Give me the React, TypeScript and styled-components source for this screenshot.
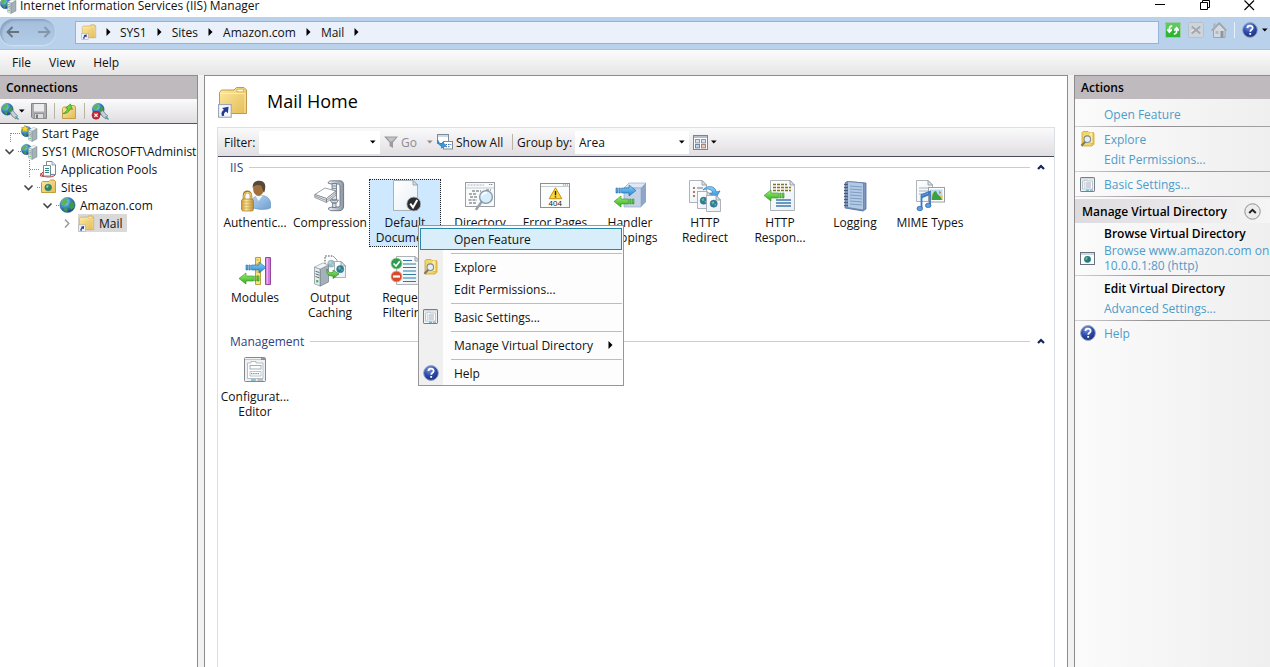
import React from "react";
import styled, { createGlobalStyle } from "styled-components";

const GlobalStyle = createGlobalStyle`
  * { box-sizing: border-box; }
  html, body, #root { height: 100%; }
  body {
    margin: 0;
    overflow: hidden;
    background: #f0f0f0;
    color: #111;
    font-family: "Open Sans", "Noto Sans", sans-serif;
    font-size: 12px;
    line-height: 15px;
  }
  button, input, select { font: inherit; color: inherit; }
  button { border: 0; padding: 0; background: none; text-align: left; }
  ul { list-style: none; margin: 0; padding: 0; }
  h1, h2, h3 { margin: 0; font-size: inherit; }
  svg { display: block; flex: none; }
`;

/* ---------- window frame ---------- */

const Window = styled.div`
  display: flex;
  flex-direction: column;
  min-height: 100%;
`;

const TitleBar = styled.header`
  display: flex;
  align-items: center;
  height: 17px;
  padding-bottom: 6px;
  background: #fff;
`;

const WindowTitle = styled.h1`
  flex: 1;
  padding-left: 3px;
  font-weight: 400;
`;

const WindowButton = styled.button`
  display: flex;
  justify-content: center;
  width: 45px;
  &:last-child { width: 42px; }
`;

const NavBar = styled.nav`
  display: flex;
  align-items: center;
  height: 33px;
  padding-bottom: 2px;
  background: #b9d1ea;
  border-bottom: 1px solid #a9c1de;
`;

const BackForward = styled.div`
  display: flex;
  justify-content: space-between;
  align-items: center;
  width: 55px;
  height: 26px;
  padding: 0 4px 0 6px;
  border-radius: 13px;
  background: linear-gradient(#a3bddb, #b3cce8);
  box-shadow: inset 2px 2px 2px #8ca6c4, 0 1px 2px #d6e4f5;
`;

const Address = styled.ol`
  display: flex;
  align-items: center;
  flex: 1;
  height: 23px;
  margin: 0 0 0 20px;
  padding: 0 0 0 5px;
  list-style: none;
  background: #eaf1fb;
  border: 1px solid #96b3d4;
`;

const Crumb = styled.li`
  display: flex;
  align-items: center;
  & > svg:last-child { margin: 0 10px; }
  &:first-child > svg:last-child { margin: 0 9px; }
`;

const NavTools = styled.div`
  display: flex;
  align-items: center;
  gap: 7px;
  width: 111px;
  padding: 0 0 4px 6px;
`;

const Divider = styled.span<{ $light?: boolean }>`
  width: 1px;
  height: 16px;
  background: ${(p) => (p.$light ? "#e6effa" : "#b9b4a4")};
`;

const MenuBar = styled.div`
  display: flex;
  align-items: center;
  height: 25px;
  gap: 18px;
  padding-left: 12px;
  background: linear-gradient(#fcfcfc, #e6e5e6);
`;

const Body = styled.div`
  display: flex;
  flex: 1;
  gap: 6px;
  background: #f3f2f3;
`;

/* ---------- shared ---------- */

const PanelTitle = styled.h2`
  height: 24px;
  padding: 4px 6px;
  font-weight: 600;
  font-size: 12px;
  line-height: 15px;
  color: #000;
  background: #bebabe;
  border-top: 1px solid #8e8c8e;
`;

const IconButton = styled.button<{ $gap?: number }>`
  display: flex;
  align-items: center;
  gap: ${(p) => p.$gap ?? 0}px;
`;

/* ---------- connections ---------- */

const Connections = styled.aside`
  width: 198px;
  flex: none;
  background: #fff;
  border-right: 1px solid #8c8c8c;
  overflow: hidden;
`;

const TreeToolbar = styled.div`
  display: flex;
  align-items: center;
  height: 25px;
  padding-left: 1px;
  border-bottom: 1px solid #55535a;
  background: linear-gradient(#fbfbfb, #dfdde0);
`;

const ToolGroup = styled.div`
  display: flex;
  align-items: center;
  gap: 6px;
  & + & { margin-left: 7px; }
`;

const TreeRow = styled.li<{ $level: number }>`
  display: flex;
  align-items: center;
  height: 18px;
  padding-left: ${(p) => p.$level * 19}px;
  white-space: nowrap;
`;

const TreeNode = styled.span<{ $selected?: boolean }>`
  display: flex;
  align-items: center;
  gap: 4px;
  height: 18px;
  padding-right: 4px;
  background: ${(p) => (p.$selected ? "#d9d9d9" : "transparent")};
`;

/* ---------- workspace ---------- */

const Workspace = styled.main`
  display: flex;
  flex-direction: column;
  flex: 1;
  min-width: 0;
  padding: 0 12px;
  background: #fff;
  border: 1px solid #8c8c8c;
  border-bottom: 0;
`;

const Heading = styled.div`
  display: flex;
  align-items: center;
  gap: 18px;
  height: 51px;
`;

const PageTitle = styled.h2`
  padding-bottom: 2px;
  font-size: 18px;
  line-height: 24px;
  font-weight: 400;
  color: #000;
`;

const FeatureBox = styled.section`
  flex: 1;
  border: 1px solid #dcdfe3;
  border-bottom: 0;
`;

const FilterBar = styled.div`
  display: flex;
  align-items: center;
  height: 29px;
  padding-left: 2px;
  background: linear-gradient(#fbfafb, #e0dee1);
  border-bottom: 1px solid #4a485c;
`;

const FilterLabel = styled.label<{ $width: number }>`
  width: ${(p) => p.$width}px;
  padding-left: 4px;
  white-space: nowrap;
`;

const Combo = styled.span<{ $width: number }>`
  display: flex;
  align-items: center;
  width: ${(p) => p.$width}px;
  height: 23px;
  padding-right: 4px;
  background: #fff;
  & input, & select {
    flex: 1;
    min-width: 0;
    height: 23px;
    border: 0;
    outline: 0;
    padding: 0 4px;
    background: none;
    appearance: none;
  }
`;

const BarButton = styled.button<{ $muted?: boolean; $width?: number }>`
  display: flex;
  align-items: center;
  gap: 3px;
  width: ${(p) => (p.$width ? p.$width + "px" : "auto")};
  margin-left: 4px;
  white-space: nowrap;
  color: ${(p) => (p.$muted ? "#8d8b8f" : "#111")};
`;

const GroupHeader = styled.div`
  display: flex;
  align-items: center;
  gap: 6px;
  height: 20px;
  padding: 0 8px 0 12px;
  color: #2f4180;
  & h3 { font-weight: 400; }
`;

const Rule = styled.span`
  flex: 1;
  height: 1px;
  background: #c2cfd8;
`;

const TileGrid = styled.ul`
  display: flex;
  flex-wrap: wrap;
  padding: 2px 60px 2px 0;
`;

const Tile = styled.li`
  position: relative;
  width: 75px;
  height: 75px;
`;

const TileButton = styled.button<{ $selected?: boolean }>`
  display: flex;
  flex-direction: column;
  align-items: center;
  gap: 3px;
  width: 72px;
  height: 68px;
  margin: 0 1px;
  text-align: center;
  white-space: pre;
  border: 1px dotted ${(p) => (p.$selected ? "#222" : "transparent")};
  background: ${(p) => (p.$selected ? "#cde8ff" : "transparent")};
`;

/* ---------- context menu ---------- */

const ContextMenu = styled.div`
  position: absolute;
  left: 50px;
  top: 46px;
  z-index: 2;
  width: 206px;
  padding: 2px 1px 1px;
  border: 1px solid #979797;
  background: linear-gradient(to right, #f0f0f0 24px, #fdfdfd 24px);
`;

const MenuItem = styled.button<{ $active?: boolean }>`
  display: flex;
  align-items: center;
  width: 100%;
  height: 22px;
  padding: 0 8px 0 2px;
  border: 1px solid ${(p) => (p.$active ? "#2a85ad" : "transparent")};
  background: ${(p) => (p.$active ? "#d8eefb" : "transparent")};
`;

const MenuIcon = styled.span`
  width: 31px;
  height: 16px;
`;

const MenuText = styled.span`
  flex: 1;
  white-space: nowrap;
`;

const MenuSeparator = styled.div`
  height: 1px;
  margin: 3px 0 2px 31px;
  background: #bdbdbd;
`;

/* ---------- actions ---------- */

const Actions = styled.aside`
  width: 196px;
  flex: none;
  background: linear-gradient(to right, #fbfbfb, #f0eff0);
  border-left: 1px solid #8c8c8c;
`;

const ActionList = styled.div`
  padding-top: 5px;
`;

const ActionRow = styled.div`
  display: flex;
  align-items: center;
  min-height: 20px;
  padding-left: 5px;
`;

const ActionIcon = styled.span`
  width: 24px;
  flex: none;
`;

const ActionLink = styled.a`
  color: #4d9cc9;
  text-decoration: none;
  white-space: pre;
`;

const ActionHeading = styled.h3`
  white-space: nowrap;
  font-weight: 600;
  color: #000;
`;

const ActionRule = styled.div`
  height: 1px;
  margin: 2px 0;
  background: linear-gradient(to right, #d4d2d4, #8f8d8f 40%, #a3a1a3);
`;

const SectionBar = styled.div`
  display: flex;
  align-items: center;
  justify-content: space-between;
  height: 24px;
  padding: 0 9px 0 7px;
  white-space: nowrap;
  background: linear-gradient(to right, #dddbdd, #f6f5f6);
`;

/* ---------- icons ---------- */

const HiddenSvg = styled.svg`
  position: absolute;
`;

const Defs = () => (
  <HiddenSvg width="0" height="0" aria-hidden>
    <defs>
      <radialGradient id="sea" cx="35%" cy="30%" r="75%">
        <stop offset="0" stopColor="#bfe6fb" /><stop offset=".45" stopColor="#3c8fd0" /><stop offset="1" stopColor="#133d7c" />
      </radialGradient>
      <linearGradient id="folder" x1="0" y1="0" x2="1" y2="1">
        <stop offset="0" stopColor="#fdeaa0" /><stop offset="1" stopColor="#e5bb58" />
      </linearGradient>
      <linearGradient id="steel" x1="0" x2="1">
        <stop offset="0" stopColor="#f1f4f6" /><stop offset="1" stopColor="#8b95a2" />
      </linearGradient>
      <linearGradient id="gold" x1="0" x2="1">
        <stop offset="0" stopColor="#d09a34" /><stop offset=".4" stopColor="#fbe9a2" /><stop offset="1" stopColor="#c08a2c" />
      </linearGradient>
      <linearGradient id="green" x1="0" y1="0" x2="0" y2="1">
        <stop offset="0" stopColor="#a5f07a" /><stop offset="1" stopColor="#2cab1e" />
      </linearGradient>
      <linearGradient id="blue" x1="0" y1="0" x2="0" y2="1">
        <stop offset="0" stopColor="#8fd2f8" /><stop offset="1" stopColor="#2487d4" />
      </linearGradient>
      <linearGradient id="paper" x1="0" y1="0" x2="1" y2="1">
        <stop offset="0" stopColor="#ffffff" /><stop offset="1" stopColor="#e8f0f6" />
      </linearGradient>
      <linearGradient id="shirt" x1="0" y1="0" x2="1" y2="1">
        <stop offset="0" stopColor="#b7d6f3" /><stop offset="1" stopColor="#6f9ed0" />
      </linearGradient>
      <radialGradient id="helpFill" cx="40%" cy="25%" r="80%">
        <stop offset="0" stopColor="#7d9ae0" /><stop offset=".5" stopColor="#2f4fae" /><stop offset="1" stopColor="#152a74" />
      </radialGradient>
    </defs>
  </HiddenSvg>
);

const Globe = ({ x = 0, y = 0, size = 16 }: { x?: number; y?: number; size?: number }) => (
  <g transform={`translate(${x} ${y}) scale(${size / 16})`}>
    <circle cx="8" cy="8" r="7.6" fill="url(#sea)" stroke="#315f8e" strokeWidth=".5" />
    <path d="M3 3.5C5 1.5 7 1 8.5 1.2L7.5 3.5 9 5 6.5 7 5 9.5 2 8 1.2 6Z" fill="#5cb45a" />
    <path d="M10 6.5 13 4.2 15 7.2 14.6 10.5 12 13 10.5 11 9 9Z" fill="#3c9a4a" />
    <path d="M4.5 10.5 7.5 11.5 7.8 15 5 14Z" fill="#3f9d50" />
  </g>
);

const Server = ({ x, y, scale = 1 }: { x: number; y: number; scale?: number }) => (
  <g transform={`translate(${x} ${y}) scale(${scale})`}>
    <path d="M0 2.5 3.5 3.7V14L0 12.6Z" fill="#e6ecef" stroke="#78868e" strokeWidth=".4" />
    <path d="M3.5 3.7 8.5 1.2V11.5L3.5 14Z" fill="#a4b1b8" stroke="#66747c" strokeWidth=".4" />
    <path d="M0 2.5 5 0 8.5 1.2 3.5 3.7Z" fill="#f2f5f6" stroke="#8b989f" strokeWidth=".4" />
    <path d="M.6 5 3 5.8M.6 6.6 3 7.4M.6 8.2 3 9" stroke="#5f6d76" strokeWidth=".6" />
    <rect x="1" y="10.4" width="1.3" height="1.3" fill="#37b23c" />
  </g>
);

const Shortcut = ({ x, y, s = 1 }: { x: number; y: number; s?: number }) => (
  <g transform={`translate(${x} ${y}) scale(${s})`}>
    <rect x=".5" y=".5" width="11" height="11" fill="#f6f8fc" stroke="#a0a8b8" />
    <path d="M3.4 10.4C2.4 7.6 3.4 6 5.2 5.2L3.6 3.4 9.2 2.4 8.6 8 7 6.6C5.6 7.4 4.8 8.4 5.4 10.2Z" fill="#233a94" />
  </g>
);

const FolderShortcut = ({ size }: { size: number }) => (
  <svg width={size} height={size} viewBox="0 0 32 32">
    <path d="M2.5 6.5 4.5 4H17L19.5 1.5H27L29.5 4V27.5H4.5L2.5 25.5Z" fill="url(#folder)" stroke="#bf9a48" />
    <path d="M3.5 7.5H28V27" fill="none" stroke="#fff3c0" strokeWidth=".8" />
    <path d="M20 5.8V3.2H26.5V5.8Z" fill="#fff8dd" stroke="#c09a44" strokeWidth=".6" />
    <Shortcut x={1} y={18} s={1.15} />
  </svg>
);

const ServerGlobe = ({ star }: { star?: boolean }) => (
  <svg width="17" height="17" viewBox="0 0 17 17">
    <Globe x={0} y={1} size={11} />
    <Server x={7.5} y={2.4} />
    {star && <path d="M4 0 5.2 2.3 8 2.7 6 4.3 6.5 7 4 5.8 1.6 7 2.1 4.3 0 2.7 2.9 2.3Z" fill="#f7d433" stroke="#b98b13" strokeWidth=".4" />}
  </svg>
);

const GlobeIcon = () => (
  <svg width="17" height="16" viewBox="0 0 16 16"><Globe /></svg>
);

const PoolsIcon = () => (
  <svg width="17" height="17" viewBox="0 0 17 17">
    <ellipse cx="8.5" cy="13" rx="7" ry="3" fill="#f5dada" stroke="#c03b3b" />
    <path d="M6.5.5H12L15.5 4V13.5H6.5Z" fill="#fff" stroke="#7b8a97" />
    <path d="M3.5 4.5H10.5V15H3.5Z" fill="#fff" stroke="#7b8a97" />
    <path d="M5 7.5H9M5 9.5H9M5 11.5H9" stroke="#2f8a8a" />
    <path d="M12 .5V4H15.5" fill="#d8e4ec" stroke="#7b8a97" strokeWidth=".7" />
    <path d="M1 12 .5 15 4 15.5" fill="none" stroke="#c03b3b" />
  </svg>
);

const SitesIcon = () => (
  <svg width="17" height="16" viewBox="0 0 17 16">
    <path d="M1.5 3.5 2.5 2.5H9L10.5 1H14L15.5 2.5V13.5H1.5Z" fill="url(#folder)" stroke="#c49a3c" />
    <circle cx="8.2" cy="8.5" r="3.3" fill="#2b8a5a" stroke="#2a6d8a" strokeWidth=".6" />
    <path d="M6.4 6.8 8.6 6.2 8 8.4 6.2 8.6Z" fill="#9fe0b0" />
  </svg>
);

const PlugIcon = ({ remove }: { remove?: boolean }) => (
  <svg width="18" height="17" viewBox="0 0 18 17">
    <Globe x={remove ? 1 : 0} y={0} size={12.5} />
    <path d="M9 9 12 7.5 14 10.5 16.5 12.5 15 16 11 13Z" fill="#c6d2da" stroke="#6c7a84" strokeWidth=".8" />
    <path d="M14.5 13.5 17.5 16.5" stroke="#3ba2a2" strokeWidth="1.4" />
    {remove && (
      <>
        <circle cx="5" cy="12.2" r="4" fill="#cc2b36" stroke="#8c1a22" strokeWidth=".6" />
        <path d="M3.4 10.6 6.6 13.8M6.6 10.6 3.4 13.8" stroke="#fff" strokeWidth="1.2" />
      </>
    )}
  </svg>
);

const SaveIcon = () => (
  <svg width="16" height="16" viewBox="0 0 16 16">
    <path d="M.5.5H15.5V15.5H2L.5 14Z" fill="#adadaf" stroke="#858588" />
    <rect x="3" y="1" width="10" height="7.5" fill="#ececed" />
    <rect x="3.5" y="10.5" width="9" height="5" fill="#dcdcde" stroke="#939396" />
    <rect x="5" y="11.5" width="2" height="4" fill="#77777b" />
  </svg>
);

const UpFolderIcon = () => (
  <svg width="16" height="17" viewBox="0 0 16 17">
    <path d="M1.5 5.5 2.5 4H8L9.5 2.5H13.5L14.5 4V15.5H1.5Z" fill="url(#folder)" stroke="#c2a04a" />
    <path d="M2 10.6C4.6 9.4 6 7.6 6.6 5.4L4.6 5 9.4 1 11.4 6.4 9.2 5.9C8.2 9 5.6 10.8 2 10.6Z" fill="#6fd040" stroke="#37921c" strokeWidth=".7" />
  </svg>
);

const DropArrow = ({ muted }: { muted?: boolean }) => (
  <svg width="6" height="4" viewBox="0 0 6 4"><path d="M0 .5H5.6L2.8 3.5Z" fill={muted ? "#8d8b8f" : "#000"} /></svg>
);

const RightArrow = () => (
  <svg width="5" height="8" viewBox="0 0 5 8"><path d="M.5 0 4.5 4 .5 8Z" fill="#000" /></svg>
);

const NavArrow = ({ flip }: { flip?: boolean }) => (
  <svg width="14" height="12" viewBox="0 0 14 12" fill="none" stroke={flip ? "#8696a9" : "#66727f"} strokeWidth="1.8">
    <path d={flip ? "M1 6H12.5M7.5 1 12.5 6 7.5 11" : "M13 6H1.5M6.5 1 1.5 6 6.5 11"} />
  </svg>
);

const HelpIcon = () => (
  <svg width="16" height="16" viewBox="0 0 16 16">
    <circle cx="8" cy="8" r="7.4" fill="url(#helpFill)" stroke="#9aa6c6" />
    <path d="M5.4 6C5.4 2.9 10.7 2.9 10.7 5.9 10.7 7.8 8.2 7.8 8.2 9.8" fill="none" stroke="#fff" strokeWidth="1.7" />
    <rect x="7.3" y="11" width="1.8" height="1.8" fill="#fff" />
  </svg>
);

const RefreshIcon = () => (
  <svg width="16" height="16" viewBox="0 0 16 16">
    <rect x=".5" y=".5" width="15" height="15" rx="1" fill="#2fb435" stroke="#9ccca0" />
    <rect x="1" y="1" width="14" height="6" fill="#74d273" opacity=".7" />
    <path d="M7.2 4.2C4.6 4 4.3 5.6 4.4 8.6M2.2 7.4 4.4 10.2 6.8 7.4M8.8 11.8C11.4 12 11.7 10.4 11.6 7.4M9.2 8.6 11.6 5.8 13.8 8.6" fill="none" stroke="#fff" strokeWidth="1.7" />
  </svg>
);

const StopIcon = () => (
  <svg width="16" height="16" viewBox="0 0 16 16">
    <rect x=".5" y=".5" width="15" height="15" rx="1" fill="#cdd4db" stroke="#b8c0c9" />
    <path d="M3.8 4.5 12.2 11.5M12.2 4.5 3.8 11.5" stroke="#a3a8ad" strokeWidth="2" />
    <path d="M6 7.5 3 9.5" stroke="#e8ecef" />
  </svg>
);

const HomeIcon = () => (
  <svg width="16" height="17" viewBox="0 0 16 17">
    <path d="M2.5 8V15.5H14V8L8.2 2Z" fill="#d5dae0" stroke="#9ba3ab" />
    <path d="M.6 8.6 8.2 1 15.4 8.6" fill="none" stroke="#9fa7b0" strokeWidth="1.6" />
    <rect x="2.5" y="1.5" width="2" height="4" fill="#aab1b9" />
    <rect x="4.5" y="9" width="3" height="3" fill="#b3bac1" />
    <rect x="9.5" y="9" width="3" height="6.5" fill="#8d959d" />
  </svg>
);

const ExploreIcon = () => (
  <svg width="16" height="16" viewBox="0 0 16 16">
    <path d="M2 1.5 3 .5H8L9 1.5H13.5V13.5L12 15H2Z" fill="#f2d868" stroke="#bd9a34" strokeWidth=".7" />
    <path d="M10.5 2.5H14.5V13.5H10.5Z" fill="#e2b93c" />
    <path d="M9.5 1.5H12.5V12H9.5Z" fill="#fbeea0" />
    <circle cx="7.3" cy="8.2" r="3.3" fill="#e4eef4" stroke="#7f8d96" strokeWidth="1.1" />
    <path d="M5.2 10.7 1.4 14.8" stroke="#84795d" strokeWidth="2" />
  </svg>
);

const SettingsIcon = ({ size = 15 }: { size?: number }) => (
  <svg width={size} height={size} viewBox="0 0 15 15">
    <rect x=".5" y=".5" width="14" height="14" rx=".6" fill="#f0f3f6" stroke="#74808c" />
    <path d="M1 1.8H14" stroke="#b5c0ca" strokeWidth=".7" />
    <path d="M2.5 12V4H4.5V3.2H7V4H12.5V12Z" fill="#fff" stroke="#a2b0bc" strokeWidth=".7" />
    <path d="M5.5 6H11M5.5 8H11M5.5 10H11" stroke="#8796a3" strokeWidth=".8" />
    <path d="M3.8 6H4.8M3.8 8H4.8M3.8 10H4.8" stroke="#7b8894" strokeWidth=".8" />
    <path d="M6 13.2H9" stroke="#3aa7cf" /><path d="M10 13.2H13" stroke="#8a98a4" />
  </svg>
);

const BrowseIcon = () => (
  <svg width="15" height="13" viewBox="0 0 15 13">
    <rect x=".5" y=".5" width="14" height="12" fill="#fbfcfd" stroke="#66737f" />
    <path d="M1 2H14" stroke="#a5b3bf" />
    <circle cx="7.5" cy="7.3" r="3.4" fill="#27797f" />
    <path d="M5.6 5.5 7.8 5 7 8 5.2 7.6Z" fill="#6dc08b" />
  </svg>
);

const FunnelIcon = () => (
  <svg width="14" height="14" viewBox="0 0 14 14">
    <path d="M0 1.5H14L9 7.5V13L5.5 11V7.5Z" fill="#9b9b9e" />
    <path d="M3 2.5H12L8 6.5H6Z" fill="#c3c3c6" />
  </svg>
);

const ShowAllIcon = () => (
  <svg width="16" height="16" viewBox="0 0 16 16">
    <rect x=".5" y=".5" width="11" height="9" fill="#fff" stroke="#7d8b98" />
    <path d="M1 2H11" stroke="#9fb3c4" />
    <rect x="6.5" y="7.5" width="9" height="7.5" fill="#fff" stroke="#7d8b98" />
    <path d="M8.5 10.5H10M11 10.5H12.5M8.5 12.7H10M11 12.7H12.5M13.3 10.5H14.3" stroke="#3f6ca8" />
    <path d="M.8 6C1.6 8.4 3.2 9.6 5 9.8L5.6 8 9.2 12 4.2 14.2 4.6 12.2C2.2 11.6.6 9.4.8 6Z" fill="#3a9ade" stroke="#1e6ba6" strokeWidth=".5" />
  </svg>
);

const ViewIcon = () => (
  <svg width="15" height="15" viewBox="0 0 15 15">
    <rect x=".5" y=".5" width="14" height="14" fill="#fff" stroke="#7b8591" />
    <path d="M1 2H14" stroke="#96a4b2" strokeWidth="1.4" />
    <rect x="2.5" y="4.5" width="4" height="3.4" fill="#dbe4f2" stroke="#8795ae" /><rect x="8.5" y="4.5" width="4" height="3.4" fill="#dbe4f2" stroke="#8795ae" />
    <rect x="2.5" y="9.5" width="4" height="3.4" fill="#c5d3ea" stroke="#7385a4" /><rect x="8.5" y="9.5" width="4" height="3.4" fill="#f0c9bd" stroke="#a4857a" />
  </svg>
);

const Caret = () => (
  <svg width="10" height="6" viewBox="0 0 10 6"><path d="M2 5 5 2 8 5" fill="none" stroke="#14275c" strokeWidth="2.2" /></svg>
);

const RoundCaret = () => (
  <svg width="17" height="17" viewBox="0 0 17 17">
    <circle cx="8.5" cy="8.5" r="7.7" fill="#ececec" stroke="#8f8f8f" />
    <path d="M5.2 10 8.5 6.8 11.8 10" fill="none" stroke="#222" strokeWidth="2" />
  </svg>
);

const Big = ({ children }: { children: React.ReactNode }) => (
  <svg width="32" height="32" viewBox="0 0 32 32">{children}</svg>
);

const Page = ({ x, y, w, h }: { x: number; y: number; w: number; h: number }) => (
  <g transform={`translate(${x} ${y})`}>
    <path d={`M.5.5H${w - 5}L${w - 0.5} 5V${h - 0.5}H.5Z`} fill="url(#paper)" stroke="#9aa1a7" strokeWidth=".8" />
    <path d={`M${w - 5} .5V5H${w - 0.5}Z`} fill="#dfe5ea" stroke="#8b9298" strokeWidth=".8" />
  </g>
);

const AuthIcon = () => (
  <Big>
    <path d="M12 27C12 19 15 16 20 15.5 27 15 31 18 31.5 23L31.5 28C28 30 18 30 12 27Z" fill="url(#shirt)" stroke="#6c97c6" strokeWidth=".7" />
    <path d="M16.5 15.8 19.5 21 24 15.6Z" fill="#f3f7fb" />
    <ellipse cx="19.5" cy="8.7" rx="5.4" ry="7.2" fill="#a0703f" />
    <path d="M13.6 8C13.4 2 17 .5 20.5.7 26 1 27.5 5 25.4 12 24 13.5 23.8 8 22 5.6 18.5 4.5 15 5 13.6 8Z" fill="#57493a" />
    <path d="M5 20V16C5 10.5 12 10.5 12 16V20" fill="none" stroke="#a7771e" strokeWidth="2.6" />
    <path d="M5 20V16C5 11.3 12 11.3 12 16V20" fill="none" stroke="#f4da86" strokeWidth="1.1" />
    <rect x="2.5" y="19" width="12" height="12" rx="2" fill="url(#gold)" stroke="#a3782a" strokeWidth=".7" />
    <path d="M3 22H14M3 25H14M3 28H14" stroke="#c19238" strokeWidth=".6" />
  </Big>
);

const CompressionIcon = () => (
  <Big>
    <path d="M14 3C14.5 1.2 16 .8 18 .8H26C28.5.8 29.6 2.4 29.6 5V26C29.6 29 28 30.7 25 30.7H18C15.8 30.7 14.6 30 14.4 28L18 27H24C25.6 27 26 26 26 24.5V7C26 5 25.2 4 23.5 4H17Z" fill="url(#steel)" stroke="#5b6676" strokeWidth=".8" />
    <path d="M18 3.5H22.5V20H18ZM16 20H24.5L22.5 23H18ZM18.6 23H22V27.5H18.6Z" fill="#d7dce4" stroke="#66717f" strokeWidth=".8" />
    <path d="M18 6H22.5M18 8.5H22.5M18 11H22.5" stroke="#7a8594" strokeWidth=".8" />
    <path d="M.8 14.5 11 8 22 11 12.5 18.5Z" fill="#fff" stroke="#767d85" strokeWidth=".7" />
    <path d="M.8 14.5V17.5L12.5 22.5V18.5ZM12.5 18.5V22.5L22 15V11Z" fill="#e6e9ec" stroke="#767d85" strokeWidth=".7" />
    <path d="M.8 16 12.5 20.5 22 13" fill="none" stroke="#767d85" strokeWidth=".7" />
  </Big>
);

const DefaultDocIcon = () => (
  <Big>
    <Page x={4} y={0} w={25} h={31} />
    <circle cx="24.8" cy="24" r="7" fill="#2b2d30" stroke="#b9bfc6" strokeWidth=".8" />
    <path d="M21.2 23.6 24 27.4 28.2 20" fill="none" stroke="#fff" strokeWidth="2" />
  </Big>
);

const DirectoryIcon = () => (
  <Big>
    <rect x="1.5" y="2.5" width="29" height="24" fill="#f9fafb" stroke="#9a9ea2" />
    <path d="M2 8H30" stroke="#c5ccd2" />
    <path d="M3.5 5H20" stroke="#a9b6c2" strokeDasharray="2 1" /><path d="M25 4.5H29" stroke="#7e8993" strokeDasharray="1.2 .7" />
    <path d="M8 11H17M5 14H13M6 17H13M4.5 20H13M5 23H13M22 10H27" stroke="#5b6167" strokeWidth="1.1" strokeDasharray="3 1" />
    <path d="M17.5 22 12.5 29" stroke="#98a0a8" strokeWidth="2.4" strokeLinecap="round" />
    <circle cx="22" cy="17" r="6.4" fill="#d3edfb" fillOpacity=".92" stroke="#8596a6" strokeWidth="1.3" />
    <path d="M18 16A4.6 4.6 0 0 1 23 12.8" fill="none" stroke="#fff" strokeWidth="1.4" />
  </Big>
);

const ErrorIcon = () => (
  <Big>
    <rect x="1.5" y="3.5" width="29" height="24" fill="#fbfcfc" stroke="#8b9095" />
    <path d="M2 6.5H30" stroke="#c5ccd2" /><path d="M24 5H29" stroke="#7e8993" strokeDasharray="1.2 .7" />
    <path d="M16.5 7.8 22.8 18.7H10.2Z" fill="#fdd835" stroke="#c59312" strokeLinejoin="round" />
    <path d="M16.5 11V15.2M16.5 16.3V17.6" stroke="#222" strokeWidth="1.4" />
    <text x="16.2" y="26.4" textAnchor="middle" fontSize="8" fontWeight="400" fontFamily="Liberation Sans, sans-serif" fill="#222">404</text>
  </Big>
);

const BlueArrow = ({ x, y }: { x: number; y: number }) => (
  <path transform={`translate(${x} ${y})`} d="M0 3H1.5V8H0ZM2.8 3H4.3V8H2.8ZM5.6 3H13V0L20 5.5 13 11V8H5.6Z" fill="url(#blue)" stroke="#1a68a8" strokeWidth=".6" />
);
const GreenArrow = ({ x, y }: { x: number; y: number }) => (
  <path transform={`translate(${x} ${y})`} d="M20 3H18.5V8H20ZM17.2 3H15.7V8H17.2ZM14.4 3H7V0L0 5.5 7 11V8H14.4Z" fill="url(#green)" stroke="#2b9117" strokeWidth=".6" />
);

const HandlerIcon = () => (
  <Big>
    <path d="M10 8 15 3H32V22L27 27H10Z" fill="#8ea7c8" />
    <path d="M10 8 15 3H32L27 8Z" fill="#dfe9f5" stroke="#8aa2c2" strokeWidth=".6" />
    <path d="M10 8H27V27H10Z" fill="#c3d2e6" stroke="#8aa2c2" strokeWidth=".6" />
    <BlueArrow x={2} y={5} /><GreenArrow x={0} y={16} />
  </Big>
);

const SmallGlobe = ({ x, y }: { x: number; y: number }) => (
  <g transform={`translate(${x} ${y})`}>
    <circle cx="3.7" cy="3.7" r="3.6" fill="#2a7d9a" stroke="#3d6c95" strokeWidth=".5" />
    <path d="M1.4 2.2 3.6 1 4.4 3 2.6 4.4ZM4.2 4.6 6 3.6 5.8 6Z" fill="#62c08a" />
  </g>
);

const RedirectIcon = () => (
  <Big>
    <Page x={0} y={0} w={18} h={23} />
    <path d="M4 8H6M4 12H6M4 16H6" stroke="#a24a32" strokeWidth="1.6" /><path d="M8 8H14M8 12H12" stroke="#6b7680" />
    <Page x={8} y={11} w={15} h={18} /><SmallGlobe x={11} y={17} />
    <path d="M14 10C17 5.4 26 4.6 27.4 12L31 11 26.6 18.5 20.6 13.2 23.6 12.8C22.6 8.6 18 8.2 14 10Z" fill="url(#blue)" stroke="#1d6aa8" strokeWidth=".6" />
    <Page x={17} y={15} w={15} h={17} /><SmallGlobe x={21} y={20} />
  </Big>
);

const ResponseIcon = () => (
  <Big>
    <Page x={6} y={0} w={25} h={31} />
    <path d="M9 4.5H23M9 7.5H27M9 10.5H27" stroke="#84721d" strokeWidth="1.3" strokeDasharray="3 1" />
    <path d="M12 20H27M12 23H27M12 26H27" stroke="#3f7aae" strokeWidth="1.3" />
    <GreenArrow x={0} y={10} />
  </Big>
);

const LoggingIcon = () => (
  <Big>
    <path d="M6 3 8 1.5 27 3V29L24 31 6 28Z" fill="#7e96bd" stroke="#566d97" strokeWidth=".8" />
    <path d="M8.5 1.5 24.5 3V30L8.5 27.5Z" fill="#b3cae6" stroke="#6480ad" strokeWidth=".8" />
    <path d="M11 6 23 7M11 9 23 10M11 12 23 13M11 15 23 16M11 18 23 19M11 21 23 22M11 24 23 25" stroke="#7895bd" strokeWidth=".9" />
    <path d="M5 4.5H9M5 7.5H9M5 10.5H9M5 13.5H9M5 16.5H9M5 19.5H9M5 22.5H9M5 25.5H9" stroke="#4a5c7a" strokeWidth="1.2" />
  </Big>
);

const MimeIcon = () => (
  <Big>
    <Page x={2} y={0} w={17} h={22} />
    <path d="M5 8H14M5 11H14M5 14H12" stroke="#a9b1b8" />
    <rect x="14.5" y="7.5" width="16" height="14.5" fill="#fff" stroke="#9aa0a5" />
    <rect x="16.5" y="9.5" width="12" height="10.5" fill="#b7dcf2" />
    <path d="M16.5 16 19 13.5 23 16 28.5 15V20H16.5Z" fill="#eec944" />
    <path d="M18 20C18 15 19.5 11 22 11L23.5 14 27 17.5 28 20Z" fill="#3ba043" /><path d="M25 11 27 12.5 25.5 14Z" fill="#d65e39" />
    <path d="M7.5 28V15L16 11.5V25" fill="none" stroke="#3f79c0" strokeWidth="1.8" /><path d="M7.5 17.2 16 13.7" stroke="#3f79c0" strokeWidth="2.2" />
    <ellipse cx="5.8" cy="28.5" rx="2.8" ry="2.2" fill="#5c9ee2" stroke="#2a60a6" strokeWidth=".7" /><ellipse cx="14.2" cy="25.4" rx="2.8" ry="2.2" fill="#5c9ee2" stroke="#2a60a6" strokeWidth=".7" />
  </Big>
);

const ModulesIcon = () => (
  <Big>
    <path d="M16.5 2.5H21.5V29.5H16.5Z" fill="#f8e27a" stroke="#bba23c" />
    <path d="M17.5 5H19.5M17.5 9H19.5M17.5 13H19.5M17.5 17H19.5M17.5 21H19.5M17.5 25H19.5" stroke="#c2a236" />
    <path d="M26.5 2.5H31.5V29.5H26.5Z" fill="#cf7fd8" stroke="#95479f" /><path d="M28.2 3V29" stroke="#f0c2f4" />
    <BlueArrow x={7} y={7} /><GreenArrow x={0} y={18} />
  </Big>
);

const OutputIcon = () => (
  <Big>
    <path d="M11 12V1H19L23 5V12" fill="#fff" stroke="#333" strokeWidth=".9" strokeDasharray="1.6 1.2" />
    <g opacity=".5"><SmallGlobe x={13.5} y={5} /></g>
    <Server x={0.5} y={8} scale={1.65} />
    <Page x={20} y={6} w={12} h={17} /><SmallGlobe x={22.5} y={10.5} />
    <path d="M13 14C14 17.5 16 18 19 17.5V15L25 19 19 23.5V21C15 21.5 12 19 13 14Z" fill="url(#green)" stroke="#218214" strokeWidth=".6" />
  </Big>
);

const RequestIcon = () => (
  <Big>
    <Page x={7} y={1} w={24} h={29} />
    <path d="M14 5.5H23M14 9H27M14 12.5H27M14 16H27M14 19.5H27M14 23H27M14 26.5H27" stroke="#2e7aa2" strokeWidth="1.2" />
    <circle cx="7.5" cy="8.5" r="5.5" fill="#2c9b4a" stroke="#a9d2ac" strokeWidth=".8" /><path d="M4.5 8.5 7 11 10.8 6.2" fill="none" stroke="#fff" strokeWidth="1.7" />
    <circle cx="7.5" cy="21.5" r="5.5" fill="#d84a2c" stroke="#e6b1a8" strokeWidth=".8" /><path d="M4 21.5H11" stroke="#fff" strokeWidth="2.2" />
  </Big>
);

const ConfigIcon = () => (
  <Big>
    <rect x="5.5" y="3.5" width="21" height="24" rx="1" fill="#eff2f4" stroke="#85898d" />
    <path d="M6 5.5H26" stroke="#c0c6cb" /><path d="M22 5H26" stroke="#5d666e" strokeWidth="1.2" />
    <path d="M8.5 24.5V9H12V7.5H17V9H24V24.5Z" fill="#fff" stroke="#a4afb8" strokeWidth=".8" />
    <rect x="11" y="11.5" width="11" height="3.5" fill="#fff" stroke="#8c9cab" strokeWidth=".8" />
    <path d="M11 17.5H22V22H11Z" fill="#fff" stroke="#9baab6" strokeWidth=".7" /><path d="M12 19.7H20" stroke="#6b7885" strokeDasharray="1.4 .8" />
    <path d="M12 26H17" stroke="#3aa7cf" strokeWidth="1.2" /><path d="M18.5 26H24" stroke="#8fa3b2" strokeWidth="1.2" />
  </Big>
);

/* ---------- tree connectors ---------- */

type Joint = "start" | "branch" | "open" | "closed";

const TreeJoint = ({ kind }: { kind: Joint }) => (
  <svg width="21" height="18" viewBox="0 0 21 18" fill="none" shapeRendering={kind === "start" || kind === "branch" ? "crispEdges" : "auto"}>
    {kind === "start" && <path d="M10.5 9V18M10.5 9.5H21" stroke="#888" strokeDasharray="1 1" />}
    {kind === "branch" && <path d="M10.5 0V18M10.5 9.5H21" stroke="#888" strokeDasharray="1 1" />}
    {kind === "open" && (
      <>
        <path d="M5.5 7.5 9.5 11.5 13.5 7.5" stroke="#444" strokeWidth="1.6" />
        <path d="M18 9.5H21" stroke="#888" strokeDasharray="1 1" />
      </>
    )}
    {kind === "closed" && <path d="M8 5.5 11.8 9.5 8 13.5" stroke="#9a9a9a" strokeWidth="1.5" />}
  </svg>
);

const tree: { label: string; level: number; joint: Joint; icon: React.ReactNode; selected?: boolean }[] = [
  { label: "Start Page", level: 0, joint: "start", icon: <ServerGlobe star /> },
  { label: "SYS1 (MICROSOFT\\Administrator)", level: 0, joint: "open", icon: <ServerGlobe /> },
  { label: "Application Pools", level: 1, joint: "branch", icon: <PoolsIcon /> },
  { label: "Sites", level: 1, joint: "open", icon: <SitesIcon /> },
  { label: "Amazon.com", level: 2, joint: "open", icon: <GlobeIcon /> },
  { label: "Mail", level: 3, joint: "closed", icon: <FolderShortcut size={17} />, selected: true },
];

const iisTiles: [string, React.ReactNode][] = [
  ["Authentic...", <AuthIcon />],
  ["Compression", <CompressionIcon />],
  ["Default\nDocument", <DefaultDocIcon />],
  ["Directory\nBrowsing", <DirectoryIcon />],
  ["Error Pages", <ErrorIcon />],
  ["Handler\nMappings", <HandlerIcon />],
  ["HTTP\nRedirect", <RedirectIcon />],
  ["HTTP\nRespon...", <ResponseIcon />],
  ["Logging", <LoggingIcon />],
  ["MIME Types", <MimeIcon />],
  ["Modules", <ModulesIcon />],
  ["Output\nCaching", <OutputIcon />],
  ["Request\nFiltering", <RequestIcon />],
];

const FeatureMenu = () => (
  <ContextMenu role="menu">
    <MenuItem role="menuitem" $active><MenuIcon /><MenuText>Open Feature</MenuText></MenuItem>
    <MenuSeparator />
    <MenuItem role="menuitem"><MenuIcon><ExploreIcon /></MenuIcon><MenuText>Explore</MenuText></MenuItem>
    <MenuItem role="menuitem"><MenuIcon /><MenuText>Edit Permissions...</MenuText></MenuItem>
    <MenuSeparator />
    <MenuItem role="menuitem"><MenuIcon><SettingsIcon /></MenuIcon><MenuText>Basic Settings...</MenuText></MenuItem>
    <MenuSeparator />
    <MenuItem role="menuitem"><MenuIcon /><MenuText>Manage Virtual Directory</MenuText><RightArrow /></MenuItem>
    <MenuSeparator />
    <MenuItem role="menuitem"><MenuIcon><HelpIcon /></MenuIcon><MenuText>Help</MenuText></MenuItem>
  </ContextMenu>
);

const Action = ({ text, icon }: { text: string; icon?: React.ReactNode }) => (
  <ActionRow>
    <ActionIcon>{icon}</ActionIcon>
    <ActionLink href="#">{text}</ActionLink>
  </ActionRow>
);

export default function App() {
  return (
    <Window>
      <GlobalStyle />
      <Defs />
      <TitleBar>
        <ServerGlobe />
        <WindowTitle>Internet Information Services (IIS) Manager</WindowTitle>
        <WindowButton aria-label="Minimize">
          <svg width="11" height="11" viewBox="0 0 11 11"><path d="M0 4.5H10" stroke="#000" /></svg>
        </WindowButton>
        <WindowButton aria-label="Restore">
          <svg width="11" height="11" viewBox="0 0 11 11" fill="none" stroke="#000"><path d="M.5 2.5H7.5V9.5H.5ZM2.5 2V.5H9.5V7.5H8" /></svg>
        </WindowButton>
        <WindowButton aria-label="Close">
          <svg width="11" height="11" viewBox="0 0 11 11"><path d="M.5.5 10 10M10 .5.5 10" stroke="#000" strokeWidth="1.1" /></svg>
        </WindowButton>
      </TitleBar>

      <NavBar>
        <BackForward>
          <IconButton aria-label="Back"><NavArrow /></IconButton>
          <IconButton aria-label="Forward"><NavArrow flip /></IconButton>
        </BackForward>
        <Address>
          <Crumb><FolderShortcut size={16} /><RightArrow /></Crumb>
          {["SYS1", "Sites", "Amazon.com", "Mail"].map((c) => (
            <Crumb key={c}>{c}<RightArrow /></Crumb>
          ))}
        </Address>
        <NavTools>
          <IconButton aria-label="Refresh"><RefreshIcon /></IconButton>
          <IconButton aria-label="Stop"><StopIcon /></IconButton>
          <IconButton aria-label="Home"><HomeIcon /></IconButton>
          <Divider $light />
          <IconButton aria-label="Help" $gap={4}><HelpIcon /><DropArrow /></IconButton>
        </NavTools>
      </NavBar>

      <MenuBar>
        <button>File</button>
        <button>View</button>
        <button>Help</button>
      </MenuBar>

      <Body>
        <Connections>
          <PanelTitle>Connections</PanelTitle>
          <TreeToolbar>
            <ToolGroup>
              <IconButton aria-label="Connect"><PlugIcon /><DropArrow /></IconButton>
              <IconButton aria-label="Save"><SaveIcon /></IconButton>
            </ToolGroup>
            <ToolGroup>
              <Divider />
              <IconButton aria-label="Up"><UpFolderIcon /></IconButton>
            </ToolGroup>
            <ToolGroup>
              <Divider />
              <IconButton aria-label="Delete connection"><PlugIcon remove /></IconButton>
            </ToolGroup>
          </TreeToolbar>
          <ul>
            {tree.map((n) => (
              <TreeRow key={n.label} $level={n.level}>
                <TreeJoint kind={n.joint} />
                <TreeNode $selected={n.selected}>{n.icon}{n.label}</TreeNode>
              </TreeRow>
            ))}
          </ul>
        </Connections>

        <Workspace>
          <Heading>
            <FolderShortcut size={32} />
            <PageTitle>Mail Home</PageTitle>
          </Heading>
          <FeatureBox>
            <FilterBar>
              <FilterLabel htmlFor="filter" $width={39}>Filter:</FilterLabel>
              <Combo $width={121}><input id="filter" type="text" /><DropArrow /></Combo>
              <BarButton $muted $width={43}><FunnelIcon />Go</BarButton>
              <DropArrow muted />
              <BarButton $width={75}><ShowAllIcon />Show All</BarButton>
              <Divider />
              <FilterLabel htmlFor="group" $width={62}>Group by:</FilterLabel>
              <Combo $width={114}>
                <select id="group" defaultValue="Area"><option>Area</option></select>
                <DropArrow />
              </Combo>
              <BarButton aria-label="View"><ViewIcon /><DropArrow /></BarButton>
            </FilterBar>

            <GroupHeader><h3>IIS</h3><Rule /><IconButton aria-label="Collapse IIS"><Caret /></IconButton></GroupHeader>
            <TileGrid>
              {iisTiles.map(([label, icon], i) => (
                <Tile key={label}>
                  <TileButton $selected={i === 2}>{icon}<span>{label}</span></TileButton>
                  {i === 2 && <FeatureMenu />}
                </Tile>
              ))}
            </TileGrid>
            <GroupHeader><h3>Management</h3><Rule /><IconButton aria-label="Collapse Management"><Caret /></IconButton></GroupHeader>
            <TileGrid>
              <Tile><TileButton><ConfigIcon /><span>{"Configurat...\nEditor"}</span></TileButton></Tile>
            </TileGrid>
          </FeatureBox>
        </Workspace>

        <Actions>
          <PanelTitle>Actions</PanelTitle>
          <ActionList>
            <Action text="Open Feature" />
            <ActionRule />
            <Action text="Explore" icon={<ExploreIcon />} />
            <Action text="Edit Permissions..." />
            <ActionRule />
            <Action text="Basic Settings..." icon={<SettingsIcon />} />
            <ActionRule />
            <SectionBar>
              <ActionHeading>Manage Virtual Directory</ActionHeading>
              <IconButton aria-label="Collapse section"><RoundCaret /></IconButton>
            </SectionBar>
            <ActionRow><ActionIcon /><ActionHeading>Browse Virtual Directory</ActionHeading></ActionRow>
            <Action text={"Browse www.amazon.com on\n10.0.0.1:80 (http)"} icon={<BrowseIcon />} />
            <ActionRule />
            <ActionRow><ActionIcon /><ActionHeading>Edit Virtual Directory</ActionHeading></ActionRow>
            <Action text="Advanced Settings..." />
            <ActionRule />
            <Action text="Help" icon={<HelpIcon />} />
          </ActionList>
        </Actions>
      </Body>
    </Window>
  );
}
